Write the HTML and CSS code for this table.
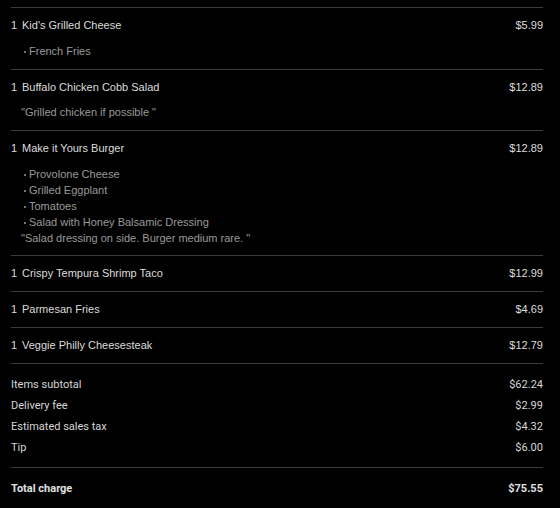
FILE: index.html
```html
<!DOCTYPE html>
<html>
<head>
<meta charset="utf-8">
<link rel="stylesheet" href="styles.css">
</head>
<body>
<div class="receipt">
  <div class="items">
    <div class="item">
      <div class="row"><span class="qty">1</span><span class="name">Kid's Grilled Cheese</span><span class="price">$5.99</span></div>
      <ul class="mods"><li>French Fries</li></ul>
    </div>
    <div class="item note-only">
      <div class="row"><span class="qty">1</span><span class="name">Buffalo Chicken Cobb Salad</span><span class="price">$12.89</span></div>
      <div class="extra"><p class="note">"Grilled chicken if possible "</p></div>
    </div>
    <div class="item has-extra">
      <div class="row"><span class="qty">1</span><span class="name">Make it Yours Burger</span><span class="price">$12.89</span></div>
      <div class="extra">
        <ul class="mods">
          <li>Provolone Cheese</li>
          <li>Grilled Eggplant</li>
          <li>Tomatoes</li>
          <li>Salad with Honey Balsamic Dressing</li>
        </ul>
        <p class="note">"Salad dressing on side. Burger medium rare. "</p>
      </div>
    </div>
    <div class="item">
      <div class="row"><span class="qty">1</span><span class="name">Crispy Tempura Shrimp Taco</span><span class="price">$12.99</span></div>
    </div>
    <div class="item">
      <div class="row"><span class="qty">1</span><span class="name">Parmesan Fries</span><span class="price">$4.69</span></div>
    </div>
    <div class="item">
      <div class="row"><span class="qty">1</span><span class="name">Veggie Philly Cheesesteak</span><span class="price">$12.79</span></div>
    </div>
  </div>
  <div class="summary">
    <div class="line"><span>Items subtotal</span><span>$62.24</span></div>
    <div class="line"><span>Delivery fee</span><span>$2.99</span></div>
    <div class="line"><span>Estimated sales tax</span><span>$4.32</span></div>
    <div class="line"><span>Tip</span><span>$6.00</span></div>
  </div>
  <div class="total"><span>Total charge</span><span>$75.55</span></div>
</div>
</body>
</html>
```
FILE: styles.css
```css
html, body {
  margin: 0;
  padding: 0;
  background: #000;
}
body {
  padding: 7px 17px 0 11px;
  font-family: "Liberation Sans", Arial, sans-serif;
  font-size: 11px;
  color: #dcdcdc;
}
.items {
  border-top: 1px solid #3c3c3c;
}
.item {
  border-bottom: 1px solid #3c3c3c;
  padding: 11px 0 11px;
}
.item > .mods {
  margin-top: 11px;
}
.item:first-child {
  padding-bottom: 10px;
}
.item.note-only {
  padding-bottom: 10px;
}
.item.has-extra {
  padding-bottom: 9px;
}
.row {
  display: flex;
  line-height: 13px;
}
.qty {
  width: 11px;
}
.name {
  flex: 1;
}
.price {
  text-align: right;
}
.mods {
  list-style: none;
  margin: 0 0 0 11px;
  padding: 0;
  color: #9a9a9a;
}
.extra {
  margin: 10px 0 0 11px;
  color: #9a9a9a;
}
.has-extra .extra {
  margin-top: 11px;
}
.extra .mods {
  margin: 0;
}
.mods li {
  display: flex;
  align-items: center;
  height: 16px;
  line-height: 16px;
}
.mods li::before {
  content: "";
  width: 2px;
  height: 2px;
  border-radius: 50%;
  background: #9a9a9a;
  margin: 1px 3px 0 2px;
}
.note {
  margin: 0 0 0 -1px;
  line-height: 16px;
}
.summary {
  font-family: Roboto, sans-serif;
  color: #d6d6d6;
  padding: 10px 0 9px;
  border-bottom: 1px solid #3c3c3c;
}
.line, .total {
  display: flex;
  justify-content: space-between;
  line-height: 21px;
}
.total {
  font-family: Roboto, sans-serif;
  font-weight: bold;
  color: #e0e0e0;
  padding-top: 10px;
}
```
